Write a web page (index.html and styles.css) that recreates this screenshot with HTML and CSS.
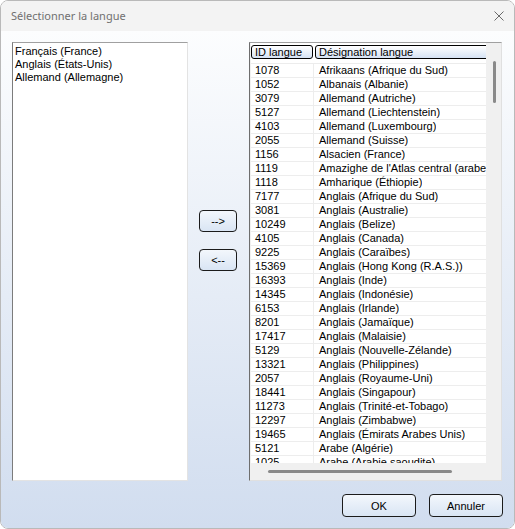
FILE: index.html
```html
<!DOCTYPE html>
<html lang="fr">
<head>
    <meta charset="UTF-8">
    <title>Sélectionner la langue</title>
    <link rel="stylesheet" href="styles.css">
</head>
<body>
    <div class="window">
        <!-- barre de titre -->
        <div class="titlebar">
            <span class="title">Sélectionner la langue</span>
            <svg class="close" width="10" height="10" viewBox="0 0 10 10">
                <path d="M0.5 0.5 L9.5 9.5 M9.5 0.5 L0.5 9.5" stroke="#6a6a6a" stroke-width="1" fill="none"/>
            </svg>
        </div>

        <div class="content">
            <div class="panes">
                <!-- langues sélectionnées -->
                <div class="list-left">
                    <div class="item">Français (France)</div>
                    <div class="item">Anglais (États-Unis)</div>
                    <div class="item">Allemand (Allemagne)</div>
                </div>

                <!-- boutons de transfert -->
                <div class="mid">
                    <button class="btn arrow">--&gt;</button>
                    <button class="btn arrow">&lt;--</button>
                </div>

                <!-- liste des langues disponibles -->
                <div class="grid-frame">
                    <div class="grid-top">
                        <div class="grid">
                            <div class="grid-head">
                                <div class="head-cell col-id">ID langue</div>
                                <div class="head-cell col-name">Désignation langue</div>
                            </div>
                            <div class="grid-body">
                                <div class="row"><span class="c-id">1078</span><span class="c-name">Afrikaans (Afrique du Sud)</span></div>
                                <div class="row"><span class="c-id">1052</span><span class="c-name">Albanais (Albanie)</span></div>
                                <div class="row"><span class="c-id">3079</span><span class="c-name">Allemand (Autriche)</span></div>
                                <div class="row"><span class="c-id">5127</span><span class="c-name">Allemand (Liechtenstein)</span></div>
                                <div class="row"><span class="c-id">4103</span><span class="c-name">Allemand (Luxembourg)</span></div>
                                <div class="row"><span class="c-id">2055</span><span class="c-name">Allemand (Suisse)</span></div>
                                <div class="row"><span class="c-id">1156</span><span class="c-name">Alsacien (France)</span></div>
                                <div class="row"><span class="c-id">1119</span><span class="c-name">Amazighe de l'Atlas central (arabe, Maroc)</span></div>
                                <div class="row"><span class="c-id">1118</span><span class="c-name">Amharique (Éthiopie)</span></div>
                                <div class="row"><span class="c-id">7177</span><span class="c-name">Anglais (Afrique du Sud)</span></div>
                                <div class="row"><span class="c-id">3081</span><span class="c-name">Anglais (Australie)</span></div>
                                <div class="row"><span class="c-id">10249</span><span class="c-name">Anglais (Belize)</span></div>
                                <div class="row"><span class="c-id">4105</span><span class="c-name">Anglais (Canada)</span></div>
                                <div class="row"><span class="c-id">9225</span><span class="c-name">Anglais (Caraïbes)</span></div>
                                <div class="row"><span class="c-id">15369</span><span class="c-name">Anglais (Hong Kong (R.A.S.))</span></div>
                                <div class="row"><span class="c-id">16393</span><span class="c-name">Anglais (Inde)</span></div>
                                <div class="row"><span class="c-id">14345</span><span class="c-name">Anglais (Indonésie)</span></div>
                                <div class="row"><span class="c-id">6153</span><span class="c-name">Anglais (Irlande)</span></div>
                                <div class="row"><span class="c-id">8201</span><span class="c-name">Anglais (Jamaïque)</span></div>
                                <div class="row"><span class="c-id">17417</span><span class="c-name">Anglais (Malaisie)</span></div>
                                <div class="row"><span class="c-id">5129</span><span class="c-name">Anglais (Nouvelle-Zélande)</span></div>
                                <div class="row"><span class="c-id">13321</span><span class="c-name">Anglais (Philippines)</span></div>
                                <div class="row"><span class="c-id">2057</span><span class="c-name">Anglais (Royaume-Uni)</span></div>
                                <div class="row"><span class="c-id">18441</span><span class="c-name">Anglais (Singapour)</span></div>
                                <div class="row"><span class="c-id">11273</span><span class="c-name">Anglais (Trinité-et-Tobago)</span></div>
                                <div class="row"><span class="c-id">12297</span><span class="c-name">Anglais (Zimbabwe)</span></div>
                                <div class="row"><span class="c-id">19465</span><span class="c-name">Anglais (Émirats Arabes Unis)</span></div>
                                <div class="row"><span class="c-id">5121</span><span class="c-name">Arabe (Algérie)</span></div>
                                <div class="row"><span class="c-id">1025</span><span class="c-name">Arabe (Arabie saoudite)</span></div>
                            </div>
                        </div>
                        <div class="vscroll"><div class="vthumb"></div></div>
                    </div>
                    <div class="hscroll"><div class="hthumb"></div></div>
                </div>
            </div>

            <!-- boutons de validation -->
            <div class="footer">
                <button class="btn dlg">OK</button>
                <button class="btn dlg">Annuler</button>
            </div>
        </div>
    </div>
</body>
</html>
```

FILE: styles.css
```css
/* page */
html, body {
    margin: 0;
    padding: 0;
    background: #ffffff;
}

body {
    font-family: "Liberation Sans", Arial, sans-serif;
    font-size: 11px;
    color: #000;
}

/* fenêtre */
.window {
    width: 515px;
    height: 529px;
    box-sizing: border-box;
    border: 1px solid #b9b9b9;
    border-radius: 8px;
    overflow: hidden;
    display: flex;
    flex-direction: column;
}

/* barre de titre */
.titlebar {
    height: 30px;
    background: #f3f3f3;
    display: flex;
    align-items: center;
    justify-content: space-between;
    padding: 0 10px 0 10px;
}

.title {
    font-family: "Noto Sans", sans-serif;
    font-size: 11px;
    color: #707070;
    margin-top: -1px;
}

.close {
    display: block;
    margin-top: -1px;
}

/* zone principale */
.content {
    flex: 1;
    background: linear-gradient(to bottom, #fcfdfe 0%, #d1ddef 100%);
    padding: 11px 12px 11px 11px;
    display: flex;
    flex-direction: column;
}

.panes {
    display: flex;
    height: 439px;
}

/* liste de gauche */
.list-left {
    width: 176px;
    box-sizing: border-box;
    background: #fff;
    border: 1px solid #e3e3e3;
    border-top-color: #a0a0a0;
    border-left-color: #7c7c7c;
    padding: 2px 2px;
}

.item {
    height: 13px;
    line-height: 13px;
    white-space: nowrap;
}

/* colonne du milieu */
.mid {
    width: 61px;
    box-sizing: border-box;
    padding: 168px 0 0 11px;
    display: flex;
    flex-direction: column;
    align-items: flex-start;
    gap: 17px;
}

/* boutons */
.btn {
    font-family: "Liberation Sans", Arial, sans-serif;
    font-size: 11px;
    color: #000;
    background: linear-gradient(to bottom, #f3f7fc, #d9e5f4);
    border: 1px solid #1b1b1b;
    border-radius: 4px;
    padding: 0;
    box-sizing: border-box;
}

.btn.arrow {
    width: 38px;
    height: 22px;
}

.btn.dlg {
    width: 74px;
    height: 23px;
}

/* grille de droite */
.grid-frame {
    width: 253px;
    box-sizing: border-box;
    border: 1px solid #e0e0e0;
    border-top-color: #a0a0a0;
    border-left-color: #6e6e6e;
    background: #f0f0f0;
    padding-left: 1px;
    display: flex;
    flex-direction: column;
}

.grid-top {
    display: flex;
    height: 420px;
}

.grid {
    width: 235px;
    background: #fff;
    overflow: hidden;
}

.grid-head {
    height: 21px;
    box-sizing: border-box;
    border-bottom: 1px solid #ececec;
    display: flex;
    align-items: flex-start;
    padding-top: 2px;
    overflow: hidden;
}

.head-cell {
    height: 14px;
    line-height: 12px;
    box-sizing: border-box;
    border: 1px solid #000;
    border-radius: 3px;
    background: linear-gradient(to bottom, #ffffff, #d5e2f3);
    padding-left: 3px;
    white-space: nowrap;
    flex-shrink: 0;
}

.head-cell.col-id {
    width: 62px;
    margin-right: 2px;
}

.head-cell.col-name {
    width: 180px;
}

.grid-body {
    height: 399px;
    overflow: hidden;
}

.row {
    display: flex;
    height: 14px;
    line-height: 13px;
    box-sizing: border-box;
    border-bottom: 1px solid #ededed;
    white-space: nowrap;
}

.c-id {
    width: 63px;
    flex-shrink: 0;
    box-sizing: border-box;
    padding-left: 4px;
    border-right: 1px solid #ededed;
}

.c-name {
    padding-left: 5px;
    overflow: hidden;
}

/* barres de défilement */
.vscroll {
    flex: 1;
}

.vthumb {
    width: 3px;
    height: 42px;
    margin: 18px 0 0 7px;
    background: #8a8a8a;
    border-radius: 2px;
}

.hscroll {
    flex: 1;
}

.hthumb {
    width: 184px;
    height: 3px;
    margin: 7px 0 0 17px;
    background: #8a8a8a;
    border-radius: 2px;
}

/* pied */
.footer {
    margin-top: 13px;
    display: flex;
    justify-content: flex-end;
    gap: 13px;
    margin-right: -1px;
}
```
